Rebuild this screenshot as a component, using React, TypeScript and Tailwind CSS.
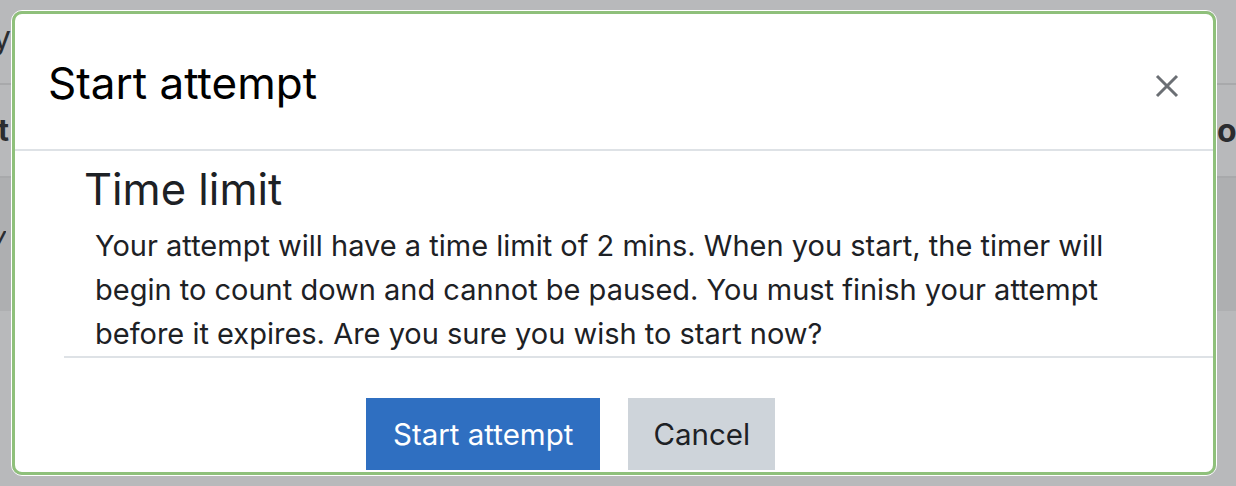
import React from 'react';

const font = { fontFamily: 'Inter, "Noto Sans", sans-serif' };

function CloseIcon() {
  return (
    <svg width="24" height="24" viewBox="0 0 24 24" className="text-[#6b6f74]">
      <path d="M2 2 L22 22 M22 2 L2 22" stroke="currentColor" strokeWidth="3" fill="none" />
    </svg>
  );
}

// faded page sitting behind the modal backdrop
function Backdrop() {
  return (
    <div className="flex flex-col w-full h-[486px] bg-[#b8b9bb] text-[#2b2d30]">
      <div className="h-[85px] flex items-start border-b-2 border-[#a8a9ab]">
        <div className="w-[11px] overflow-hidden flex justify-end pt-[14px]">
          <span className="text-[32px] whitespace-nowrap">Summary</span>
        </div>
      </div>
      <div className="h-[93px] flex items-center justify-between border-b-2 border-[#a8a9ab]">
        <div className="w-[9px] overflow-hidden flex justify-end">
          <span className="text-[30px] font-bold whitespace-nowrap">Attempt</span>
        </div>
        <div className="w-[19px] overflow-hidden flex justify-start">
          <span className="text-[32px] font-bold whitespace-nowrap">oo</span>
        </div>
      </div>
      <div className="h-[133px] bg-[#aeafb1] flex items-start pt-[38px]">
        <div className="w-[6px] overflow-hidden flex justify-end">
          <span className="text-[28px] italic whitespace-nowrap">y</span>
        </div>
      </div>
      <div className="flex-1" />
    </div>
  );
}

export default function App() {
  return (
    <div className="relative w-[1236px] h-[486px] overflow-hidden" style={font}>
      <Backdrop />

      {/* Modal */}
      <div className="absolute left-[11px] top-[10px] w-[1206px] h-[466px] rounded-[11px] border border-white">
        <div className="h-full rounded-[10px] border-[3px] border-[#8fc07b] bg-white flex flex-col overflow-hidden">
          <div className="h-[137px] shrink-0 flex items-center justify-between pl-[33px] pr-[34px] border-b-2 border-[#dee2e6]">
            <h5 className="text-[44px] text-black leading-none mt-[2px]">Start attempt</h5>
            <button className="mt-[8px]">
              <CloseIcon />
            </button>
          </div>

          <div className="pl-[49px]">
            <div className="border-b-2 border-[#dee2e6]">
              <h3 className="pl-[20px] pt-[12px] text-[43.5px] leading-[52px] text-[#1d2125]">Time limit</h3>
              <p className="pl-[31px] pt-[9px] text-[29px] leading-[44px] text-[#1d2125] w-[1075px]">
                Your attempt will have a time limit of 2 mins. When you start, the timer will begin to count down and cannot be paused. You must finish your attempt before it expires. Are you sure you wish to start now?
              </p>
            </div>
          </div>

          <div className="pl-[351px] pt-[40px] flex gap-[28px]">
            <button className="h-[72px] px-[27px] bg-[#2f6fc1] text-white text-[29.5px]">Start attempt</button>
            <button className="h-[72px] px-[25px] bg-[#ced4da] text-[#1d2125] text-[29.5px]">Cancel</button>
          </div>
        </div>
      </div>
    </div>
  );
}
